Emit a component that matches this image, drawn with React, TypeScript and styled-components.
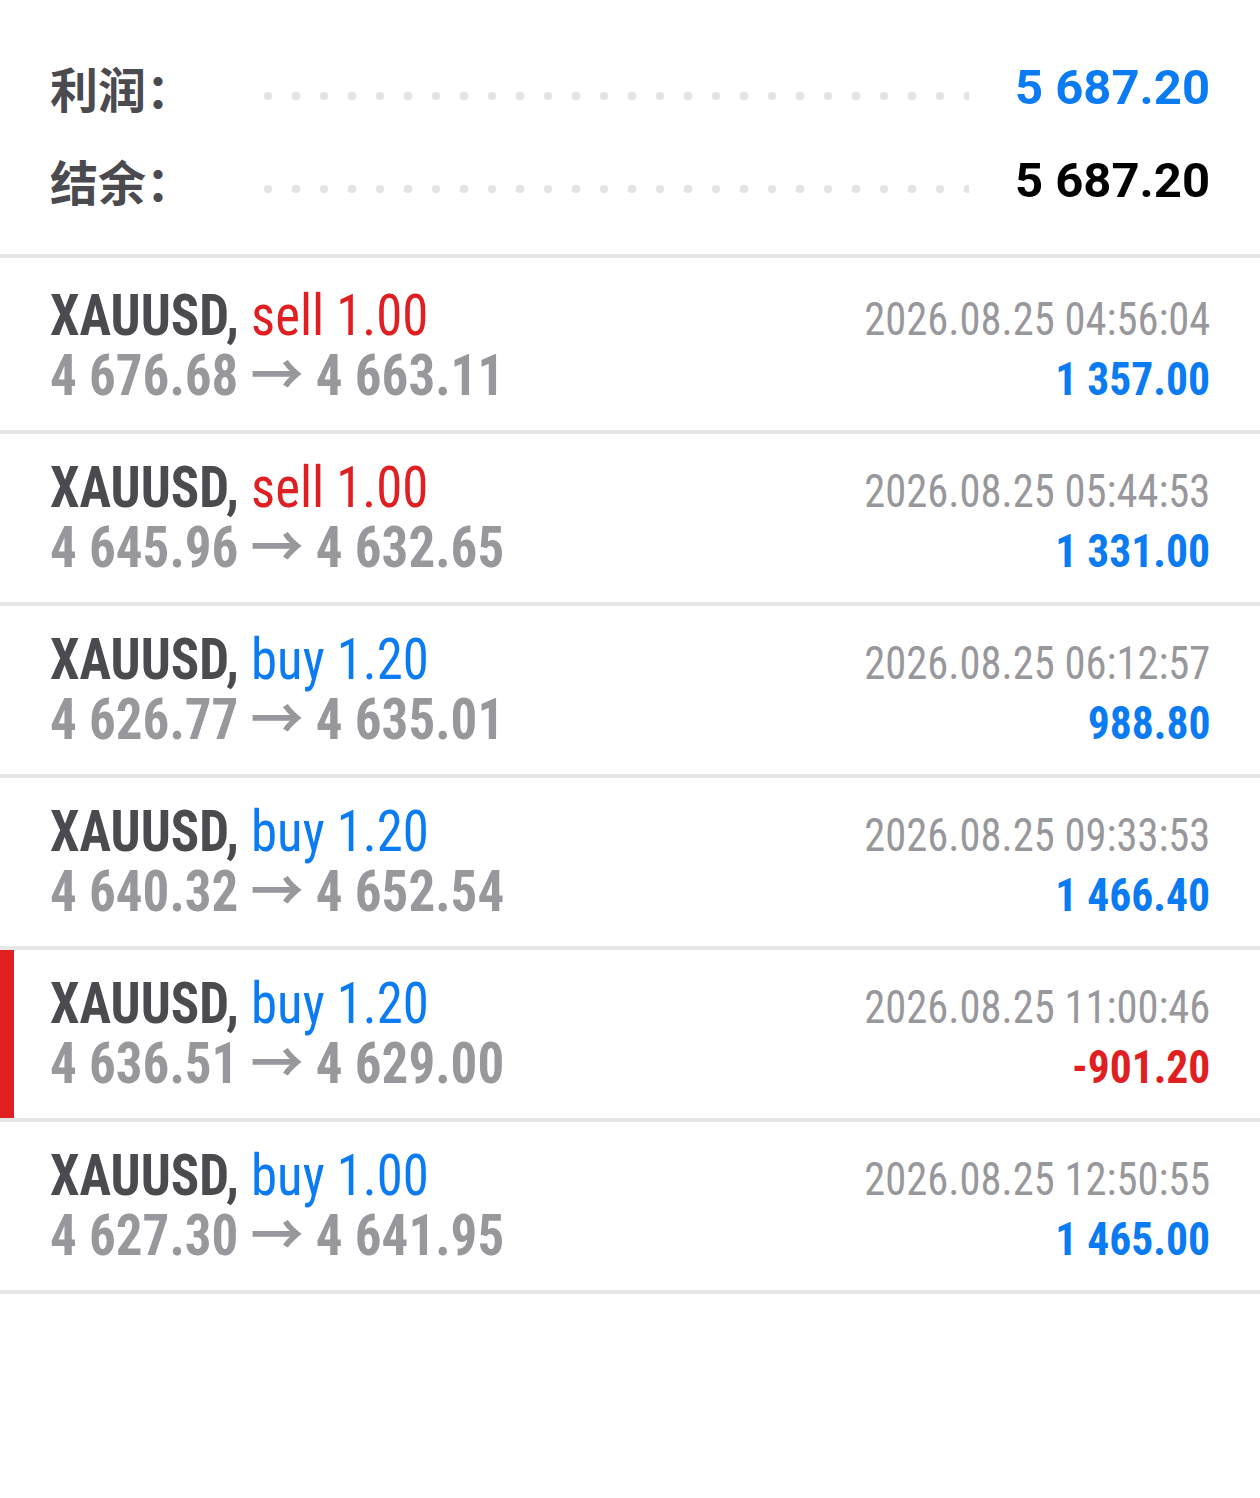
import React from "react";
import styled, { createGlobalStyle } from "styled-components";

type Deal = {
  side: "buy" | "sell";
  volume: string;
  open: string;
  close: string;
  time: string;
  profit: string;
  marked?: boolean;
};

const deals: Deal[] = [
  { side: "sell", volume: "1.00", open: "4 676.68", close: "4 663.11", time: "2026.08.25 04:56:04", profit: "1 357.00" },
  { side: "sell", volume: "1.00", open: "4 645.96", close: "4 632.65", time: "2026.08.25 05:44:53", profit: "1 331.00" },
  { side: "buy", volume: "1.20", open: "4 626.77", close: "4 635.01", time: "2026.08.25 06:12:57", profit: "988.80" },
  { side: "buy", volume: "1.20", open: "4 640.32", close: "4 652.54", time: "2026.08.25 09:33:53", profit: "1 466.40" },
  { side: "buy", volume: "1.20", open: "4 636.51", close: "4 629.00", time: "2026.08.25 11:00:46", profit: "-901.20", marked: true },
  { side: "buy", volume: "1.00", open: "4 627.30", close: "4 641.95", time: "2026.08.25 12:50:55", profit: "1 465.00" },
];

const BLUE = "#0a7bf2";
const RED = "#e01f22";

const App: React.FC = () => {
  return (
    <>
      <GlobalStyle />
      <Page>
        <Summary>
          <SummaryRow>
            <Label>利润：</Label>
            <Dots />
            <Total $color={BLUE}>5 687.20</Total>
          </SummaryRow>
          <SummaryRow>
            <Label>结余：</Label>
            <Dots />
            <Total $color="#000">5 687.20</Total>
          </SummaryRow>
        </Summary>
        <List>
          {deals.map((deal, idx) => (
            <DealRow key={idx} $marked={deal.marked}>
              <Line>
                <Title>
                  <Symbol>XAUUSD,</Symbol>{" "}
                  <Side $color={deal.side === "buy" ? BLUE : RED}>
                    {deal.side} {deal.volume}
                  </Side>
                </Title>
                <Time>{deal.time}</Time>
              </Line>
              <Line>
                <Prices>
                  {deal.open} → {deal.close}
                </Prices>
                <Profit $color={deal.profit.startsWith("-") ? RED : BLUE}>
                  {deal.profit}
                </Profit>
              </Line>
            </DealRow>
          ))}
        </List>
      </Page>
    </>
  );
};

const GlobalStyle = createGlobalStyle`
  body {
    margin: 0;
    background: #ffffff;
  }
`;

const Page = styled.div`
  width: 1260px;
  min-height: 1498px;
  background: #ffffff;
  font-family: "Roboto Condensed", Roboto, "Noto Sans CJK SC", sans-serif;
`;

const Summary = styled.section`
  padding: 41px 50px 27px;
  border-bottom: 4px solid #e6e6e6;
`;

const SummaryRow = styled.div`
  display: flex;
  align-items: center;
  height: 93px;
`;

const Label = styled.span`
  width: 214px;
  font-family: "Noto Sans CJK SC", sans-serif;
  font-size: 48px;
  font-weight: 700;
  color: #4a4a4f;
  line-height: 93px;
`;

const Dots = styled.span`
  flex: 1;
  height: 8px;
  margin-top: 16px;
  margin-right: 46px;
  background-image: radial-gradient(circle at 4px 4px, #e4e4e4 4px, transparent 4.6px);
  background-size: 28px 8px;
  background-repeat: repeat-x;
`;

const Total = styled.span<{ $color: string }>`
  font-family: Roboto, sans-serif;
  font-size: 49px;
  font-weight: 700;
  line-height: 93px;
  color: ${(p) => p.$color};
`;

const List = styled.div`
  padding-top: 4px;
`;

const DealRow = styled.div<{ $marked?: boolean }>`
  display: flex;
  flex-direction: column;
  justify-content: center;
  height: 168px;
  padding: 0 50px;
  border-bottom: 4px solid #e6e6e6;
  box-shadow: ${(p) => (p.$marked ? `inset 14px 0 0 ${RED}` : "none")};
`;

const Line = styled.div`
  display: flex;
  align-items: baseline;
  justify-content: space-between;
  height: 60px;
  line-height: 60px;
  white-space: nowrap;
`;

/* no condensed face installed: narrow the regular one */
const Narrow = styled.span`
  display: inline-block;
  line-height: 60px;
`;

const Title = styled(Narrow)`
  font-size: 57px;
  transform: scaleX(0.926);
  transform-origin: left center;
`;

const Symbol = styled.span`
  display: inline-block;
  font-weight: 700;
  color: #4a4a4f;
`;

const Side = styled.span<{ $color: string }>`
  display: inline-block;
  font-weight: 400;
  color: ${(p) => p.$color};
`;

const Prices = styled(Narrow)`
  font-size: 57px;
  font-weight: 700;
  color: #98989c;
  transform: scaleX(0.93);
  transform-origin: left center;
`;

const Time = styled(Narrow)`
  font-size: 47px;
  font-weight: 400;
  color: #98989c;
  transform: scaleX(0.905);
  transform-origin: right center;
`;

const Profit = styled(Narrow)<{ $color: string }>`
  font-size: 47px;
  font-weight: 700;
  color: ${(p) => p.$color};
  transform: scaleX(0.927);
  transform-origin: right center;
`;

export default App;
